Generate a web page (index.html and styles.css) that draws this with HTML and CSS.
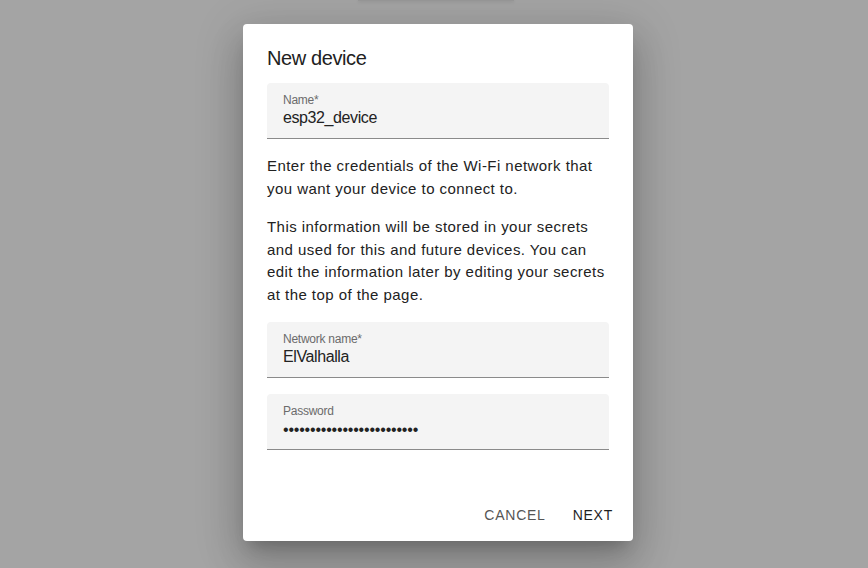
FILE: index.html
```html
<!DOCTYPE html>
<html lang="en">
<head>
    <meta charset="UTF-8">
    <meta name="viewport" content="width=device-width, initial-scale=1.0">
    <title>New device</title>
    <link rel="stylesheet" href="styles.css">
</head>
<body>
    <div class="backdrop">
        <div class="behind-bar"></div>
    </div>

    <div class="dialog">
        <h2 class="dialog-title">New device</h2>

        <div class="field">
            <label>Name*</label>
            <div class="value">esp32_device</div>
        </div>

        <p>Enter the credentials of the Wi-Fi network that you want your device to connect to.</p>
        <p>This information will be stored in your secrets and used for this and future devices. You can edit the information later by editing your secrets at the top of the page.</p>

        <div class="field">
            <label>Network name*</label>
            <div class="value">ElValhalla</div>
        </div>

        <div class="field">
            <label>Password</label>
            <div class="value dots">&bull;&bull;&bull;&bull;&bull;&bull;&bull;&bull;&bull;&bull;&bull;&bull;&bull;&bull;&bull;&bull;&bull;&bull;&bull;&bull;&bull;&bull;&bull;&bull;&bull;</div>
        </div>

        <div class="actions">
            <button class="secondary">Cancel</button>
            <button class="primary">Next</button>
        </div>
    </div>
</body>
</html>
```

FILE: styles.css
```css
body {
    margin: 0;
    height: 100vh;
    font-family: 'Liberation Sans', Arial, sans-serif;
    background-color: #a4a4a4;
    display: flex;
    justify-content: center;
    align-items: flex-start;
    overflow: hidden;
}

.backdrop {
    position: absolute;
    inset: 0;
    display: flex;
    justify-content: center;
}

.behind-bar {
    width: 156px;
    height: 1px;
    margin-left: 4px;
    background-color: #989898;
    box-shadow: 0 1px 3px rgba(0, 0, 0, 0.15);
}

.dialog {
    position: relative;
    margin-top: 24px;
    margin-left: 8px;
    width: 390px;
    box-sizing: border-box;
    padding: 0 24px;
    background-color: #ffffff;
    border-radius: 4px;
    box-shadow: 0 11px 15px -7px rgba(0, 0, 0, 0.2), 0 24px 38px 3px rgba(0, 0, 0, 0.14), 0 9px 46px 8px rgba(0, 0, 0, 0.12);
    color: #212121;
}

.dialog-title {
    margin: 0;
    padding: 21px 0 12px;
    font-size: 20px;
    font-weight: 400;
    line-height: 26px;
    letter-spacing: -0.4px;
    color: #212121;
}

.field {
    height: 55px;
    background-color: #f4f4f4;
    border-radius: 4px 4px 0 0;
    border-bottom: 1px solid #8a8a8a;
    padding: 0 16px;
    margin-bottom: 16px;
}

.field label {
    display: block;
    padding-top: 10px;
    font-size: 12px;
    line-height: 14px;
    letter-spacing: -0.25px;
    color: #6b6b6b;
}

.field .value {
    margin-top: 1px;
    font-size: 16px;
    line-height: 20px;
    letter-spacing: -0.4px;
    color: #222222;
}

.field .value.dots {
    margin-top: 2px;
    letter-spacing: -0.2px;
}

p {
    margin: 0 0 16px;
    font-size: 15px;
    line-height: 22.5px;
    letter-spacing: 0.45px;
    color: #222222;
}

.dialog > p:first-of-type {
    margin-top: 16px;
}

.actions {
    display: flex;
    justify-content: flex-end;
    gap: 11px;
    padding: 31px 0 8px;
    margin-right: -12px;
}

button {
    font-family: 'Liberation Sans', Arial, sans-serif;
    background: none;
    border: none;
    padding: 0 8px;
    height: 36px;
    font-size: 14px;
    letter-spacing: 0.75px;
    text-transform: uppercase;
    cursor: pointer;
}

button.secondary {
    color: #555555;
}

button.primary {
    color: #1f1f1f;
}
```
